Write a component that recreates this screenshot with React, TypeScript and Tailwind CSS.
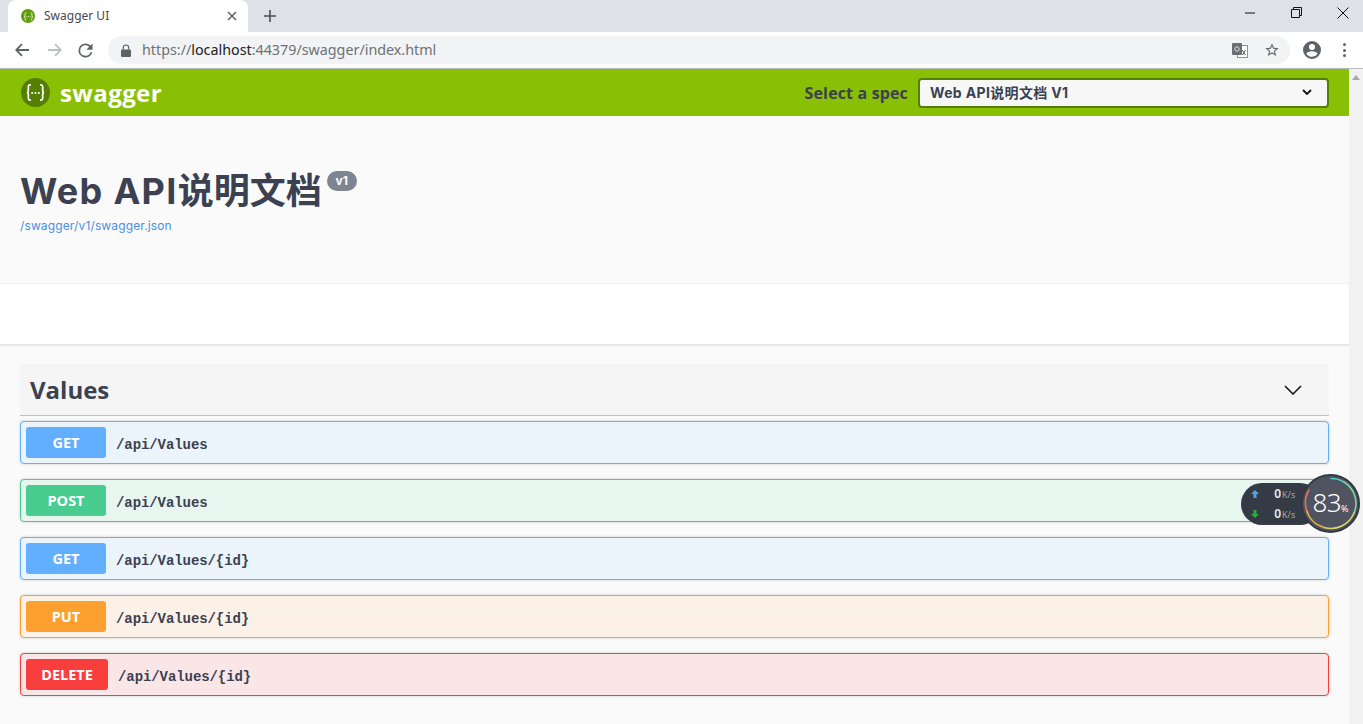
import React from 'react';

const sans = "font-['Inter','Noto_Sans_CJK_SC',sans-serif]";

const operations = [
  { method: 'GET', path: '/api/Values', row: 'border-[#61affe] bg-[#ebf3fb]', badge: 'bg-[#61affe] w-[80px]' },
  { method: 'POST', path: '/api/Values', row: 'border-[#49cc90] bg-[#e7f6ef]', badge: 'bg-[#49cc90] w-[80px]' },
  { method: 'GET', path: '/api/Values/{id}', row: 'border-[#61affe] bg-[#ebf3fb]', badge: 'bg-[#61affe] w-[80px]' },
  { method: 'PUT', path: '/api/Values/{id}', row: 'border-[#fca130] bg-[#fbf1e6]', badge: 'bg-[#fca130] w-[80px]' },
  { method: 'DELETE', path: '/api/Values/{id}', row: 'border-[#f93e3e] bg-[#fbe6e7]', badge: 'bg-[#f93e3e] w-[82px]' },
];

const Braces = ({ size, color }: { size: number; color: string }) => (
  <svg width={size} height={size} viewBox="0 0 24 24" fill="none" stroke={color} strokeWidth="1.800" strokeLinecap="round">
    <path d="M6.500 4C4.500 4 4.500 5 4.500 7v3.500c0 1-.6 1.500-1.600 1.500 1 0 1.600.5 1.600 1.500V17c0 2 0 3 2 3" />
    <path d="M17.500 4c2 0 2 1 2 3v3.500c0 1 .6 1.500 1.600 1.500-1 0-1.600.5-1.600 1.500V17c0 2 0 3-2 3" />
    <path d="M8.500 12.500h.01M12 12.500h.01M15.500 12.500h.01" strokeWidth="2.200" />
  </svg>
);

const BrowserChrome = () => (
  <header className="h-[69px] shrink-0 border-b border-[#b8babd]">
    <div className="h-[32px] bg-[#dee1e6] flex items-end pl-[8px]">
      <div className="h-[32px] w-[240px] bg-white rounded-t-[8px] flex items-center pl-[13px] pr-[10px]">
        <div className="w-[14px] h-[14px] rounded-full bg-[#5f9c06] flex items-center justify-center">
          <Braces size={11} color="#ffffff" />
        </div>
        <span className="ml-[9px] text-[12px] text-[#45484d] font-['Noto_Sans',sans-serif] flex-1">Swagger UI</span>
        <svg width="10" height="10" viewBox="0 0 10 10" stroke="#5f6368" strokeWidth="1.500" className="mr-[1px]">
          <path d="M1 1l8 8M9 1l-8 8" />
        </svg>
      </div>
      <div className="h-[32px] flex items-center ml-[15px]">
        <svg width="14" height="14" viewBox="0 0 14 14" stroke="#4a4d52" strokeWidth="1.600">
          <path d="M7 1v12M1 7h12" />
        </svg>
      </div>
      <div className="flex-1 h-[32px] flex items-center justify-end pb-[7px]">
        <svg width="10" height="2" viewBox="0 0 10 2" stroke="#111" strokeWidth="1" className="mr-[36px]">
          <path d="M0 1h10" />
        </svg>
        <svg width="11" height="11" viewBox="0 0 11 11" fill="none" stroke="#111" strokeWidth="1" className="mr-[35px]">
          <path d="M.5 2.500h8v8h-8zM2.500 2.500v-2h8v8h-2" />
        </svg>
        <svg width="12" height="12" viewBox="0 0 12 12" stroke="#111" strokeWidth="1" className="mr-[14px]">
          <path d="M.5.5l11 11M11.500.5l-11 11" />
        </svg>
      </div>
    </div>
    <div className="h-[36px] bg-white flex items-center">
      <div className="w-[108px] shrink-0 flex items-center pl-[15px]">
        <svg width="14" height="14" viewBox="0 0 14 14" fill="none" stroke="#5f6368" strokeWidth="1.800">
          <path d="M14 7H1.500M7 1.200L1.200 7 7 12.800" />
        </svg>
        <svg width="14" height="14" viewBox="0 0 14 14" fill="none" stroke="#bdc1c6" strokeWidth="1.800" className="ml-[19px]">
          <path d="M0 7h12.500M7 1.200L12.800 7 7 12.800" />
        </svg>
        <svg width="21" height="21" viewBox="0 0 24 24" fill="#5f6368" className="ml-[13px]">
          <path d="M17.650 6.350A7.950 7.950 0 0 0 12 4a8 8 0 1 0 7.730 10h-2.080A6 6 0 1 1 12 6c1.660 0 3.140.69 4.220 1.780L13 11h7V4l-2.350 2.350z" />
        </svg>
      </div>
      <div className="w-[1182px] h-[28px] bg-[#f1f3f4] rounded-full flex items-center pl-[13px] pr-[10px]">
        <svg width="10" height="13" viewBox="0 0 10 13" fill="#5f6368">
          <path d="M1 5.500h8a1 1 0 0 1 1 1V12a1 1 0 0 1-1 1H1a1 1 0 0 1-1-1V6.500a1 1 0 0 1 1-1z" />
          <path d="M2.300 5.500V3.700a2.700 2.700 0 0 1 5.400 0v1.800" fill="none" stroke="#5f6368" strokeWidth="1.200" />
        </svg>
        <span className="ml-[11px] flex-1 text-[14.300px] text-[#6d7176] font-['Noto_Sans',sans-serif]">
          https://<span className="text-[#202124]">localhost</span>:44379/swagger/index.html
        </span>
        <svg width="16" height="15" viewBox="0 0 16 15" className="mr-[16px]">
          <rect x="5.500" y="2.500" width="10" height="12" fill="#fff" stroke="#8d9094" />
          <rect x="0" y="0" width="10" height="12" rx="1" fill="#6a6d71" />
          <circle cx="5" cy="6" r="2.200" fill="none" stroke="#dfe0e1" strokeWidth="1" />
          <path d="M10 7l3.500 5M13.500 7l-3 5" stroke="#55585c" strokeWidth="1" />
        </svg>
        <svg width="16" height="16" viewBox="0 0 24 24" fill="#5f6368">
          <path d="M22 9.240l-7.190-.62L12 2 9.190 8.630 2 9.240l5.460 4.730L5.820 21 12 17.270 18.180 21l-1.630-7.030L22 9.240zM12 15.400l-3.760 2.270 1-4.280-3.320-2.880 4.380-.38L12 6.100l1.710 4.040 4.380.38-3.320 2.880 1 4.280L12 15.400z" />
        </svg>
      </div>
      <svg width="18" height="18" viewBox="0 0 24 24" fill="#5f6368" className="ml-[13px]">
        <path d="M12 0a12 12 0 1 0 0 24 12 12 0 0 0 0-24zm0 4a4 4 0 1 1 0 8 4 4 0 0 1 0-8zm0 17c-3 0-5.700-1.500-7.300-3.800 0-2.400 4.900-3.700 7.300-3.700s7.300 1.300 7.300 3.700A8.900 8.900 0 0 1 12 21z" />
      </svg>
      <div className="ml-[22px] flex flex-col gap-[2.500px]">
        <div className="w-[3px] h-[3px] rounded-full bg-[#5f6368]" />
        <div className="w-[3px] h-[3px] rounded-full bg-[#5f6368]" />
        <div className="w-[3px] h-[3px] rounded-full bg-[#5f6368]" />
      </div>
    </div>
  </header>
);

const Topbar = () => (
  <div className={`h-[47px] bg-[#89bf04] flex items-center pl-[21px] pr-[20px] ${sans}`}>
    <div className="w-[29px] h-[29px] rounded-full bg-[#547f00] flex items-center justify-center">
      <Braces size={23} color="#ffffff" />
    </div>
    <span className="ml-[10px] text-[24px] font-bold text-white leading-none flex-1 font-['Open_Sans',sans-serif] tracking-[0.4px]">swagger</span>
    <span className="text-[16px] font-bold text-[#3b4151] mr-[10px] font-['Open_Sans',sans-serif] tracking-[0.15px]">Select a spec</span>
    <div className="w-[411px] h-[30px] border-2 border-[#547f00] rounded-[4px] bg-[#f7f7f7] flex items-center justify-between pl-[10px] pr-[15px]">
      <span className="text-[14px] font-bold text-[#3b4151] tracking-[0.35px]">Web API说明文档 V1</span>
      <svg width="10" height="7" viewBox="0 0 10 7" fill="none" stroke="#111" strokeWidth="1.800">
        <path d="M1 1l4 4 4-4" />
      </svg>
    </div>
  </div>
);

const Operation = ({ method, path, row, badge }: (typeof operations)[number]) => (
  <div className={`h-[43px] border rounded-[4px] p-[5px] flex items-center shadow-[0_0_3px_rgba(0,0,0,0.19)] ${row}`}>
    <div className={`h-[31px] rounded-[3px] flex items-center justify-center text-white text-[14.500px] font-bold font-['Open_Sans',sans-serif] ${badge}`}>
      {method}
    </div>
    <span className="ml-[10px] text-[14px] font-semibold text-[#3b4151] font-['Liberation_Mono',monospace] pt-[5px] tracking-[-0.08px]">{path}</span>
  </div>
);

const SpeedWidget = () => (
  <div className="absolute left-[1241px] top-[474px] w-[119px] h-[59px] font-['Noto_Sans',sans-serif]">
    <div className="absolute left-0 top-[9px] w-[80px] h-[42px] rounded-full bg-[#2b303b]/95 flex flex-col justify-center pl-[10px] text-[#e8e8ea]">
      <div className="h-[20px] flex items-center">
        <svg width="8" height="8" viewBox="0 0 8 8" fill="#4aa8e8"><path d="M4 0l4 4H5.500v4h-3V4H0z" /></svg>
        <span className="w-[16px] ml-[6px] text-right text-[12px] font-semibold leading-none">0</span>
        <span className="ml-[1px] text-[9px] text-[#a3a6ad] leading-none">K/s</span>
      </div>
      <div className="h-[20px] flex items-center">
        <svg width="8" height="8" viewBox="0 0 8 8" fill="#2faa3f"><path d="M4 8L0 4h2.500V0h3v4H8z" /></svg>
        <span className="w-[16px] ml-[6px] text-right text-[12px] font-semibold leading-none">0</span>
        <span className="ml-[1px] text-[9px] text-[#a3a6ad] leading-none">K/s</span>
      </div>
    </div>
    <div className="absolute left-[60px] top-0 w-[59px] h-[59px] rounded-full bg-[#505460] border-2 border-[#343843] flex items-center justify-center pb-[3px]">
      <svg width="53" height="53" viewBox="0 0 53 53" fill="none" className="absolute left-[1px] top-[1px]" strokeWidth="1.500" strokeLinecap="round">
        <path d="M27 1.500A25 25 0 0 1 40 5" stroke="#4fd1c5" />
        <path d="M40 5A25 25 0 0 1 50 36" stroke="#7ddc9a" />
        <path d="M50 36A25 25 0 0 1 20 50.500" stroke="#d9dc6a" />
        <path d="M20 50.500A25 25 0 0 1 2.500 33" stroke="#f0b13c" />
        <path d="M2.500 33A25 25 0 0 1 5 13" stroke="#ee6f57" />
      </svg>
      <span className="text-white text-[26px] font-light leading-none tracking-[-0.5px]">83</span>
      <span className="text-white text-[9px] leading-none self-end mb-[15px]">%</span>
    </div>
  </div>
);

export default function App() {
  return (
    <div className="relative w-screen h-screen overflow-hidden flex flex-col bg-[#fafafa]">
      <BrowserChrome />
      <div className="flex-1 flex min-h-0">
        <main className="flex-1 min-w-0">
          <Topbar />
          <section className={`h-[167px] px-[20px] pt-[50px] ${sans}`}>
            <div className="flex items-start">
              <h1 className="text-[36px] leading-[50px] font-bold text-[#3b4151]">
                <span className="tracking-[1.300px]">Web API</span>说明文档
              </h1>
              <span className="ml-[5px] mt-[5px] w-[30px] h-[20px] rounded-full bg-[#7d8492] text-white text-[12px] font-bold flex items-center justify-center">v1</span>
            </div>
            <a href="#" className="block text-[12px] leading-[20px] text-[#4990e2] tracking-[0.13px]">/swagger/v1/swagger.json</a>
          </section>
          <div className="h-[62px] bg-white border-y border-[#e4e4e4] border-t-[#f0f0f0] shadow-[0_1px_2px_rgba(0,0,0,0.08)]" />
          <section className="px-[20px] pt-[19px]">
            <div className="h-[52px] bg-[#f5f5f5] border-b border-[#c2c2c2] flex items-center justify-between pl-[10px] pr-[27px] font-['Open_Sans',sans-serif]">
              <span className="text-[24px] font-bold text-[#3b4151]">Values</span>
              <svg width="18" height="10" viewBox="0 0 18 10" fill="none" stroke="#111" strokeWidth="1.500">
                <path d="M1 1l8 8 8-8" />
              </svg>
            </div>
            <div className="mt-[5px] flex flex-col gap-[15px]">
              {operations.map((op, i) => (
                <Operation key={i} {...op} />
              ))}
            </div>
          </section>
        </main>
        <aside className="w-[14px] shrink-0 bg-[#f1f1f1] flex justify-center pt-[6px]">
          <svg width="8" height="5" viewBox="0 0 8 5" fill="#a8a8a8"><path d="M4 0l4 5H0z" /></svg>
        </aside>
      </div>
      <SpeedWidget />
    </div>
  );
}
